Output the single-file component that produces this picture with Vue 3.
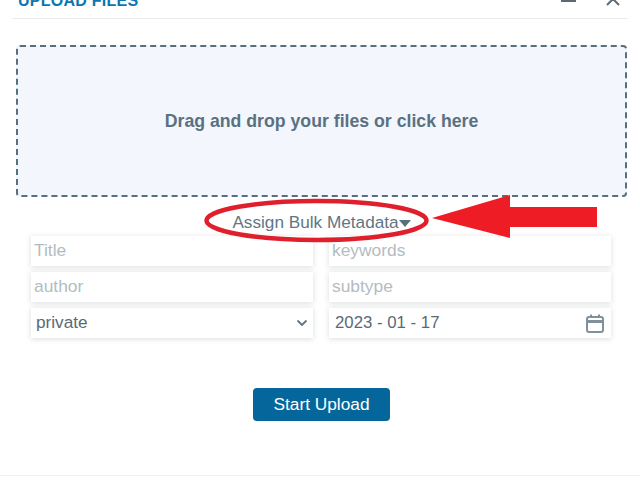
<script setup>
const fields = ["Title", "keywords", "author", "subtype"];
</script>

<template>
  <div class="modal">
    <div class="modal-header">
      <span class="modal-title">UPLOAD FILES</span>
      <div class="window-actions">
        <span class="minimize"></span>
        <svg class="close" width="14" height="14" viewBox="0 0 14 14">
          <path d="M1 1 L13 13 M13 1 L1 13" stroke="#5b6b75" stroke-width="2" fill="none" />
        </svg>
      </div>
    </div>

    <div class="modal-body">
      <div class="dropzone">Drag and drop your files or click here</div>

      <div class="bulk-toggle">
        <span>Assign Bulk Metadata</span><span class="caret"></span>
      </div>

      <div class="meta-grid">
        <input v-for="f in fields" :key="f" class="field" type="text" :placeholder="f" />
        <div class="field value-field">
          <span>private</span>
          <svg width="12" height="8" viewBox="0 0 12 8">
            <path d="M1.5 1.5 L6 6 L10.5 1.5" stroke="#5f7480" stroke-width="1.8" fill="none" />
          </svg>
        </div>
        <div class="field value-field date-field">
          <span>2023 - 01 - 17</span>
          <svg width="18" height="19" viewBox="0 0 18 19">
            <rect x="1" y="3" width="16" height="15" rx="2" stroke="#7f929c" stroke-width="2" fill="none" />
            <path d="M1 7.5 H17" stroke="#7f929c" stroke-width="3" />
            <path d="M5 0.5 V4 M13 0.5 V4" stroke="#7f929c" stroke-width="2" />
          </svg>
        </div>
      </div>

      <div class="actions">
        <button class="start-btn">Start Upload</button>
      </div>
    </div>

    <div class="modal-footer"></div>

    <!-- red annotation drawn over the screenshot -->
    <svg class="annotation" width="640" height="480" viewBox="0 0 640 480">
      <ellipse cx="316.5" cy="220.5" rx="110" ry="19.5" fill="none" stroke="#e01f2d" stroke-width="4.5" />
      <path d="M432 218 L510 195 L510 207 L597 207 L597 227 L510 227 L510 238 Z" fill="#ee1c25" />
    </svg>
  </div>
</template>

<style>
html,
body {
  margin: 0;
  background: #ffffff;
  overflow: hidden;
}
</style>

<style scoped>
.modal {
  position: relative;
  width: 640px;
  height: 480px;
  overflow: hidden;
  background: #ffffff;
  font-family: "Liberation Sans", Arial, sans-serif;
}

.modal-header {
  display: flex;
  align-items: flex-end;
  justify-content: space-between;
  height: 18px;
  margin: 0 12px;
  padding: 0 6px;
  border-bottom: 1px solid #e9ecee;
}

.modal-title {
  font-size: 16px;
  line-height: 18px;
  font-weight: 700;
  letter-spacing: 0.25px;
  color: #0b76b3;
  position: relative;
  top: -8px;
}

.window-actions {
  display: flex;
  align-items: flex-start;
  gap: 30px;
  height: 18px;
  padding-right: 2px;
}

.minimize {
  width: 15px;
  height: 2px;
  background: #5b6b75;
}

.close {
  margin-top: -8px;
}

.modal-body {
  padding: 26px 13px 0 16px;
}

.dropzone {
  display: flex;
  align-items: center;
  justify-content: center;
  box-sizing: border-box;
  height: 152px;
  padding-top: 1px;
  border: 2px dashed #56707f;
  border-radius: 4px;
  background: #f3f6fc;
  font-size: 17.7px;
  font-weight: 700;
  color: #5a7182;
}

.bulk-toggle {
  display: flex;
  align-items: center;
  justify-content: center;
  box-sizing: border-box;
  height: 39px;
  padding-top: 11px;
  font-size: 17.2px;
  color: #5f7685;
}

.caret {
  width: 0;
  height: 0;
  margin-top: 2px;
  border-left: 6px solid transparent;
  border-right: 6px solid transparent;
  border-top: 7px solid #56707f;
}

.meta-grid {
  display: grid;
  grid-template-columns: 282px 282px;
  grid-auto-rows: 30px;
  column-gap: 16px;
  row-gap: 6px;
  padding-left: 15px;
}

.field {
  box-sizing: border-box;
  width: 100%;
  height: 30px;
  border: none;
  outline: none;
  padding: 0 3px 2px;
  background: #ffffff;
  box-shadow: 0 1px 6px rgba(70, 80, 90, 0.2);
  font-family: inherit;
  font-size: 17.4px;
  color: #5f6f7a;
}

.field::placeholder {
  color: #b3bcc2;
  opacity: 1;
}

.value-field {
  display: flex;
  align-items: center;
  justify-content: space-between;
  padding: 0 5px 1px;
  font-size: 17.2px;
  color: #5a6a75;
}

.value-field svg {
  margin-right: 0;
}

.date-field {
  padding: 0 5px 0 6px;
  font-size: 16.8px;
}

.date-field svg {
  margin-right: 2px;
}

.actions {
  display: flex;
  justify-content: center;
  margin-top: 50px;
}

.start-btn {
  width: 137px;
  height: 33px;
  border: none;
  border-radius: 4px;
  background: #05669b;
  color: #ffffff;
  font-family: inherit;
  font-size: 17.3px;
}

.modal-footer {
  position: absolute;
  left: 0;
  right: 0;
  top: 475px;
  border-top: 1px solid #eef0f1;
}

.annotation {
  position: absolute;
  left: 0;
  top: 0;
  pointer-events: none;
}
</style>
